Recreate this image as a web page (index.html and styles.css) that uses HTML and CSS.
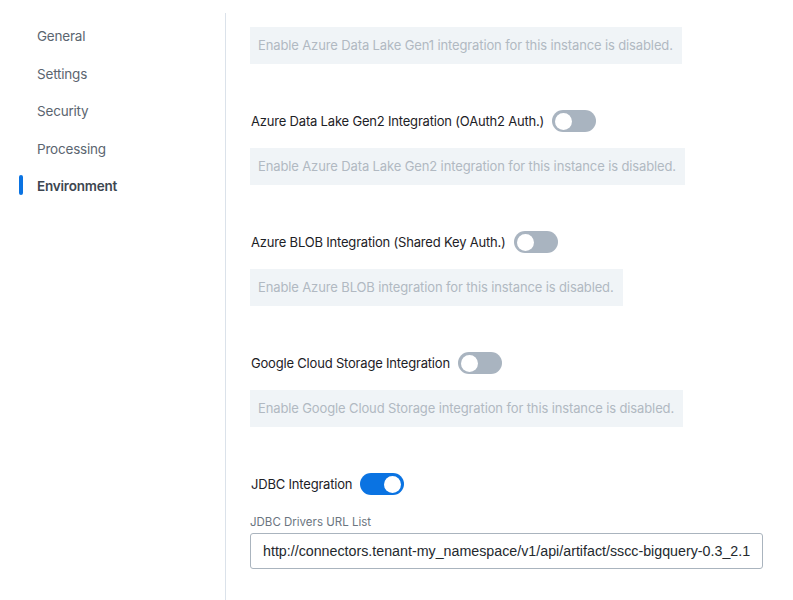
FILE: index.html
```html
<!DOCTYPE html>
<html>
<head>
<meta charset="utf-8">
<link rel="stylesheet" href="styles.css">
</head>
<body>
<div class="page">
  <nav class="sidebar">
    <a class="nav-item">General</a>
    <a class="nav-item">Settings</a>
    <a class="nav-item">Security</a>
    <a class="nav-item">Processing</a>
    <a class="nav-item active">Environment</a>
  </nav>
  <main class="content">
    <div class="note">Enable Azure Data Lake Gen1 integration for this instance is disabled.</div>

    <section class="group">
      <div class="row"><span class="label">Azure Data Lake Gen2 Integration (OAuth2 Auth.)</span><span class="toggle"></span></div>
      <div class="note">Enable Azure Data Lake Gen2 integration for this instance is disabled.</div>
    </section>

    <section class="group">
      <div class="row"><span class="label">Azure BLOB Integration (Shared Key Auth.)</span><span class="toggle"></span></div>
      <div class="note">Enable Azure BLOB integration for this instance is disabled.</div>
    </section>

    <section class="group">
      <div class="row"><span class="label">Google Cloud Storage Integration</span><span class="toggle"></span></div>
      <div class="note">Enable Google Cloud Storage integration for this instance is disabled.</div>
    </section>

    <section class="group">
      <div class="row"><span class="label">JDBC Integration</span><span class="toggle on"></span></div>
      <div class="field-label">JDBC Drivers URL List</div>
      <div class="input">http://connectors.tenant-my_namespace/v1/api/artifact/sscc-bigquery-0.3_2.1</div>
    </section>
  </main>
</div>
</body>
</html>
```
FILE: styles.css
```css
html, body { margin: 0; padding: 0; background: #fff; }
body { font-family: Inter, "Noto Sans", sans-serif; color: #1f2328; }
.page { display: flex; height: 600px; overflow: hidden; }
.sidebar {
  width: 225px; flex: none;
  padding-top: 25px;
  display: flex; flex-direction: column;
}
.nav-item {
  position: relative;
  display: block;
  padding-left: 37px;
  height: 22px; line-height: 22px;
  margin-bottom: 15.5px;
  font-size: 13.5px;
  letter-spacing: -0.2px;
  color: #5b6570;
}
.nav-item.active { color: #3d4650; font-weight: 600; }
.nav-item.active::before {
  content: ""; position: absolute; left: 19px; top: 0px;
  width: 4px; height: 20px; border-radius: 2px; background: #0a73e2;
}
.content {
  flex: 1;
  margin-top: 13px;
  border-left: 1px solid #dbe2ea;
  padding: 14px 0 0 24px;
}
.note {
  display: inline-block;
  background: #f0f4f7;
  color: #b1b9c2;
  font-size: 13px;
  letter-spacing: -0.125px;
  height: 37px; line-height: 37px;
  padding: 0 9px 0 8px;
  white-space: nowrap;
}
.group { margin-top: 46px; }
.row { display: flex; align-items: center; height: 22px; margin-bottom: 16px; }
.label { font-size: 13px; letter-spacing: -0.19px; color: #1d2126; margin-left: 1px; margin-right: 8px; }
.toggle {
  position: relative; width: 44px; height: 22px; border-radius: 11px;
  background: #a9b4c0; box-sizing: border-box;
}
.toggle::after {
  content: ""; position: absolute; top: 2.5px; left: 3px;
  width: 17px; height: 17px; border-radius: 50%; background: #fff;
}
.toggle.on { background: #0a73e2; }
.toggle.on::after { left: auto; right: 3px; }
.group:last-child .row { margin-bottom: 20px; }
.field-label { font-size: 11.5px; color: #6b7580; margin-bottom: 4px; }
.input {
  width: 513px; height: 36px; box-sizing: border-box;
  border: 1px solid #aab4be; border-radius: 3px;
  padding: 0 0 0 12px; line-height: 34px;
  font-family: "Liberation Sans", Arial, sans-serif; font-size: 14.25px; color: #24292e;
  white-space: nowrap; overflow: hidden;
}
```
